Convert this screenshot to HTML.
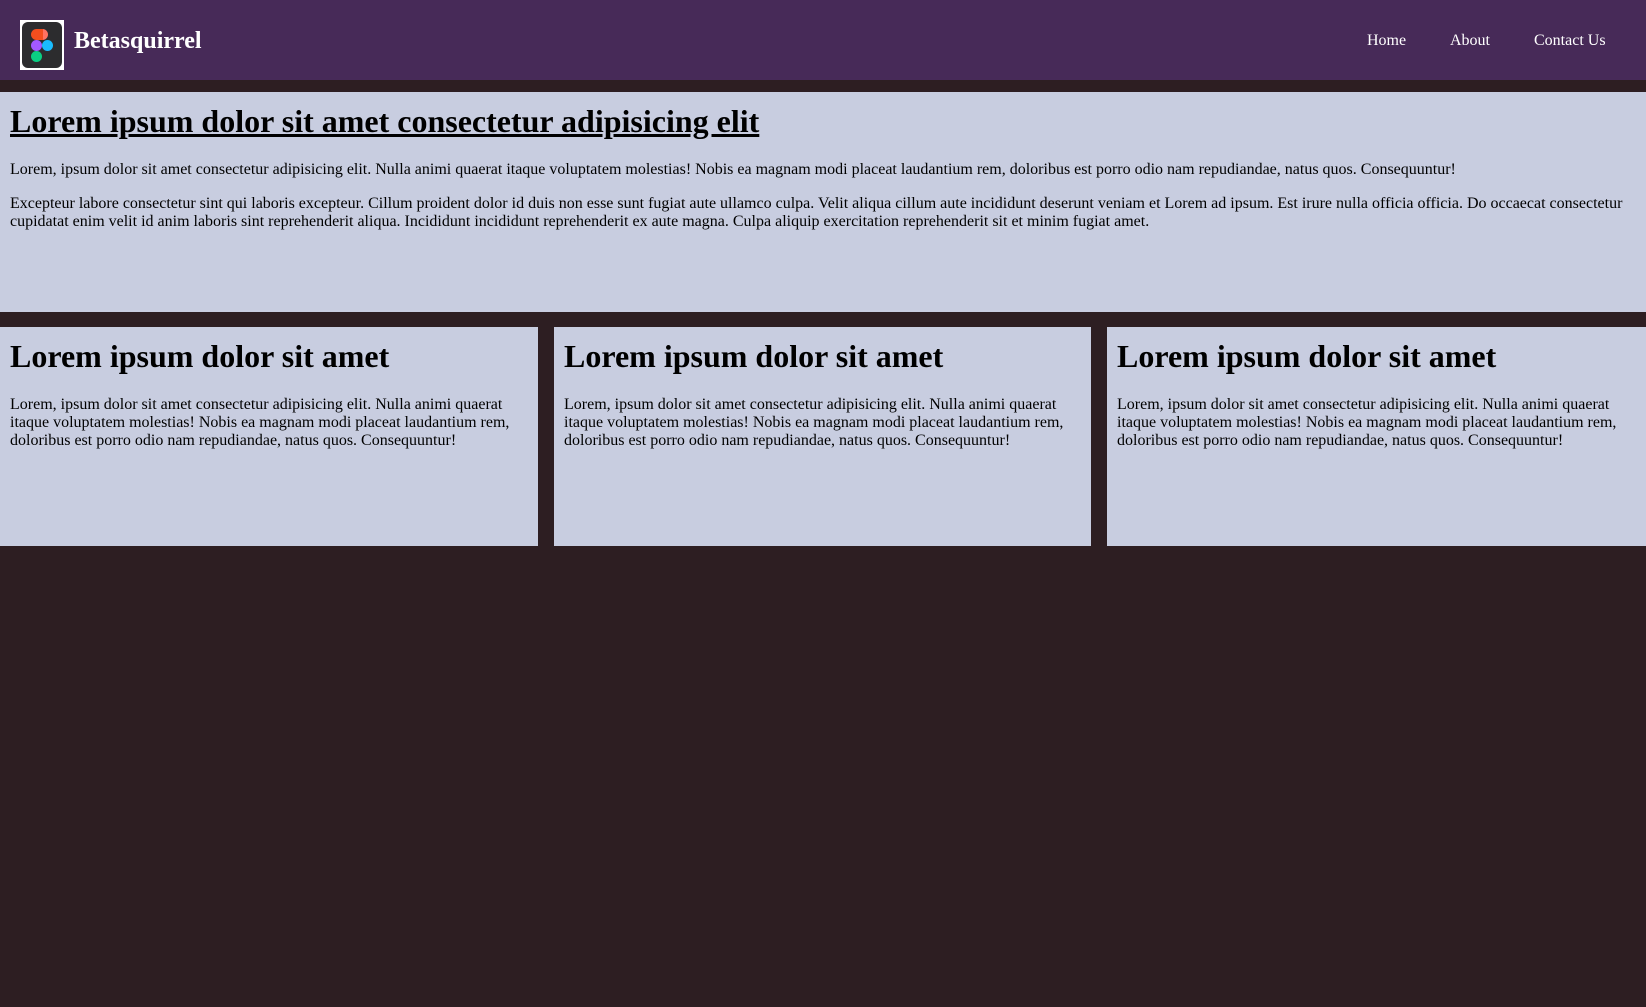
<!DOCTYPE html>
<html><head><style>
*{box-sizing:border-box}
body{margin:0;background:#2d1e22;font-family:"Liberation Serif",serif;width:1646px;height:1007px;overflow:hidden}
nav{height:80px;background:#472a58;position:relative}
.logo{position:absolute;left:20px;top:20px;width:44px;height:50px;background:#fff;padding:2px}
.logo div{width:100%;height:100%;background:#2c2c2e;border-radius:6px;position:relative}
.brand{position:absolute;left:74px;top:28px;color:#fff;font-weight:bold;font-size:24px}
.links{position:absolute;top:32px;font-size:16px;color:#fff}
.hero{position:absolute;top:92px;left:0;width:1646px;height:220px;background:#c8cde0;padding:11px 10px 10px}
h1{margin:0;font-size:32px;line-height:37px}
p{margin:21px 0 0;font-size:16px;line-height:18px}
.hero p+p{margin-top:16px}
.card{position:absolute;top:327px;height:219px;background:#c8cde0;padding:11px 10px 10px}
</style></head><body>
<nav>
<div class="logo"><div><svg width="40" height="46" viewBox="0 0 40 46">
<rect x="9" y="7" width="11" height="11" rx="5.5" fill="#f24e1e"/><rect x="15" y="7" width="11" height="11" rx="5.5" fill="#ff7262"/><rect x="14" y="7" width="7" height="11" fill="#f24e1e"/>
<circle cx="14.5" cy="23.5" r="5.5" fill="#a259ff"/><circle cx="25.5" cy="23.5" r="5.5" fill="#1abcfe"/>
<circle cx="14.5" cy="34.5" r="5.5" fill="#0acf83"/></svg></div></div>
<div class="brand">Betasquirrel</div>
<div class="links" style="left:1367px">Home</div>
<div class="links" style="left:1450px">About</div>
<div class="links" style="left:1534px">Contact Us</div>
</nav>
<div class="hero">
<h1><u>Lorem ipsum dolor sit amet consectetur adipisicing elit</u></h1>
<p>Lorem, ipsum dolor sit amet consectetur adipisicing elit. Nulla animi quaerat itaque voluptatem molestias! Nobis ea magnam modi placeat laudantium rem, doloribus est porro odio nam repudiandae, natus quos. Consequuntur!</p>
<p>Excepteur labore consectetur sint qui laboris excepteur. Cillum proident dolor id duis non esse sunt fugiat aute ullamco culpa. Velit aliqua cillum aute incididunt deserunt veniam et Lorem ad ipsum. Est irure nulla officia officia. Do occaecat consectetur cupidatat enim velit id anim laboris sint reprehenderit aliqua. Incididunt incididunt reprehenderit ex aute magna. Culpa aliquip exercitation reprehenderit sit et minim fugiat amet.</p>
</div>
<div class="card" style="left:0;width:538px"><h1>Lorem ipsum dolor sit amet</h1><p>Lorem, ipsum dolor sit amet consectetur adipisicing elit. Nulla animi quaerat itaque voluptatem molestias! Nobis ea magnam modi placeat laudantium rem, doloribus est porro odio nam repudiandae, natus quos. Consequuntur!</p></div>
<div class="card" style="left:554px;width:537px"><h1>Lorem ipsum dolor sit amet</h1><p>Lorem, ipsum dolor sit amet consectetur adipisicing elit. Nulla animi quaerat itaque voluptatem molestias! Nobis ea magnam modi placeat laudantium rem, doloribus est porro odio nam repudiandae, natus quos. Consequuntur!</p></div>
<div class="card" style="left:1107px;width:539px"><h1>Lorem ipsum dolor sit amet</h1><p>Lorem, ipsum dolor sit amet consectetur adipisicing elit. Nulla animi quaerat itaque voluptatem molestias! Nobis ea magnam modi placeat laudantium rem, doloribus est porro odio nam repudiandae, natus quos. Consequuntur!</p></div>
</body></html>
